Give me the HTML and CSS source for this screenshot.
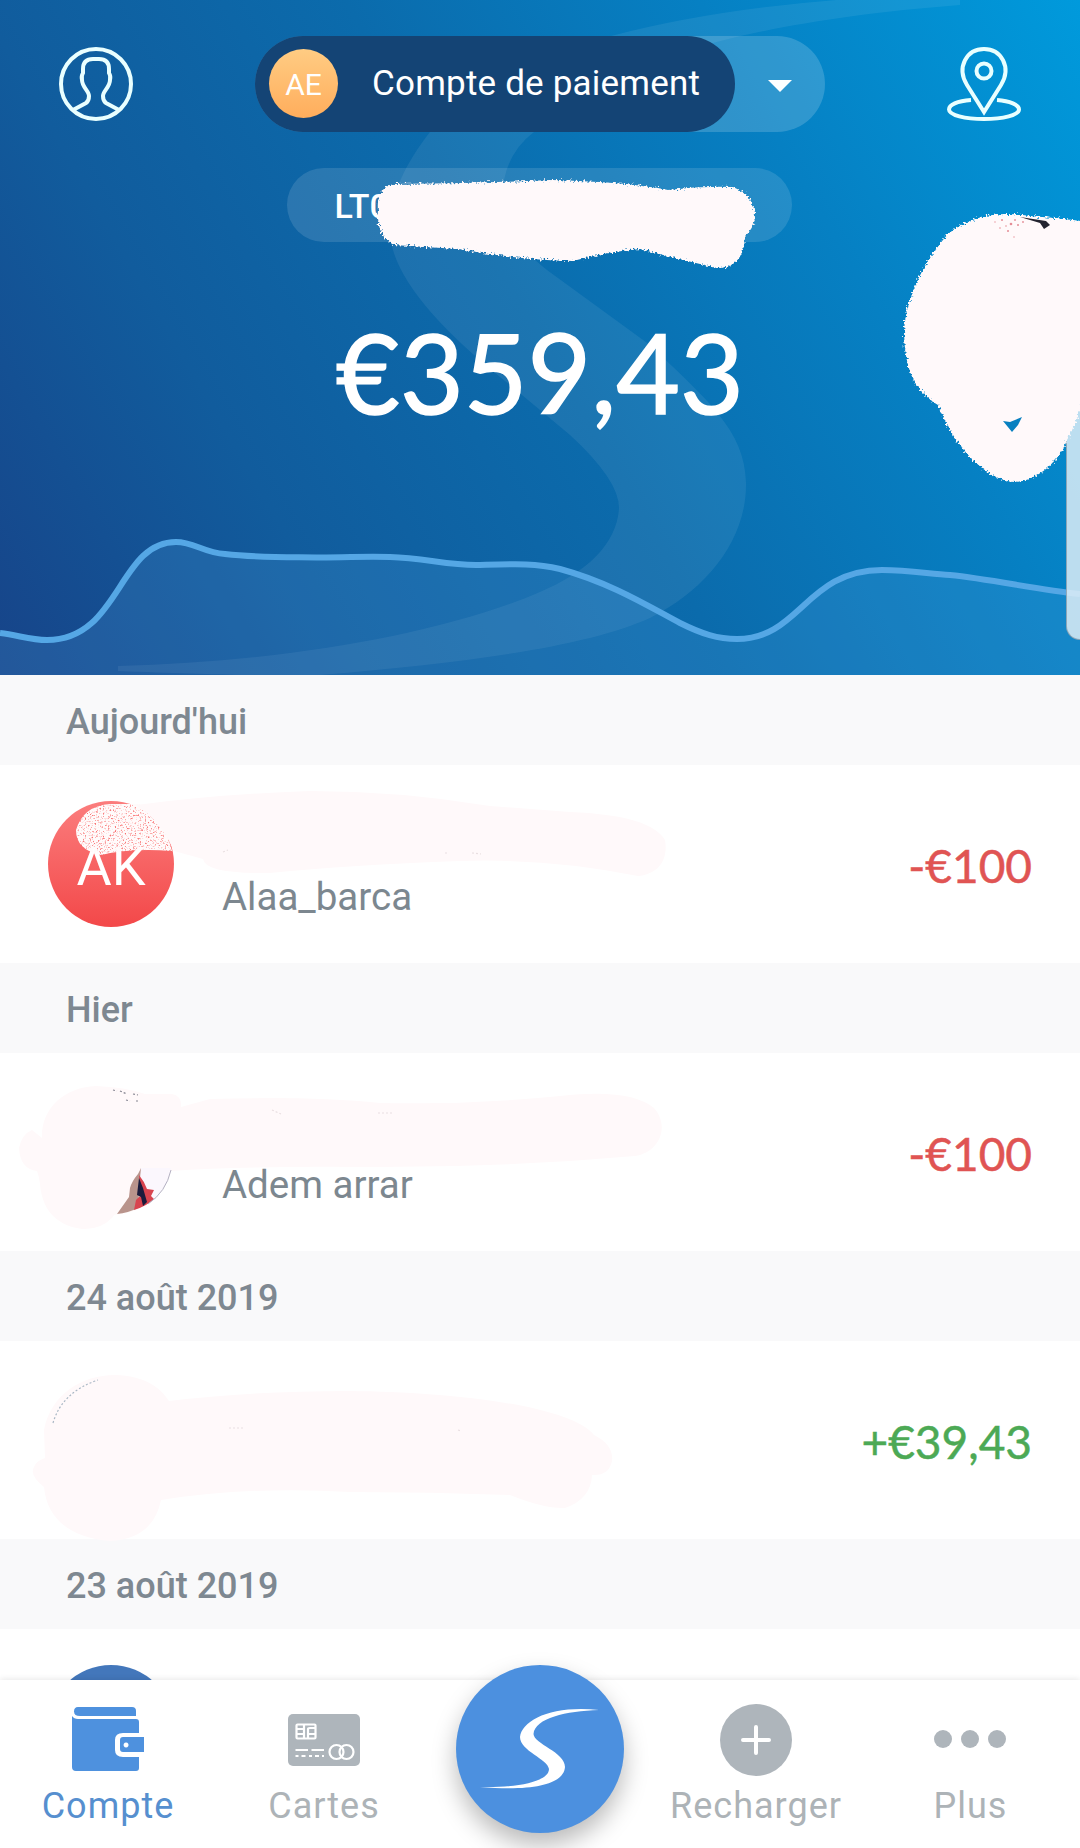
FILE: index.html
```html
<!DOCTYPE html>
<html lang="fr">
<head>
<meta charset="utf-8">
<title>Compte de paiement</title>
<link rel="stylesheet" href="styles.css">
</head>
<body>
<div class="app">
  <header class="hero">
    <svg class="hero-art" viewBox="0 0 1080 675">
      <path class="watermark" d="M960 0H836Q710 10 611 36C520 62 462 92 430 132C402 168 385 205 391 242Q402 300 510 385L570 435Q619 480 619 508C617 545 585 573 540 592C440 635 280 662 118 666V671C220 675 270 676 320 675C480 662 590 645 650 618C706 590 747 540 746 483C745 430 707 400 650 345L547 270C515 245 500 220 504 180Q510 150 534 132C580 80 700 25 960 5Z"/>
      <path class="wave-fill" d="M0 633C18 635 30 640 47 640C120 640 118 542 176 542C194 542 204 553 225 554C260 558 290 557 320 557.500C350 557.500 365 556 390 557C425 558 450 566 480 565C515 564 535 563 560 569C612 583 653 609 680 623C702 634 718 639 737 639C800 639 806 570 882 570C910 570 930 574 950 575C990 579 1040 590 1080 594V675H0Z"/>
      <path class="wave-line" d="M0 633C18 635 30 640 47 640C120 640 118 542 176 542C194 542 204 553 225 554C260 558 290 557 320 557.500C350 557.500 365 556 390 557C425 558 450 566 480 565C515 564 535 563 560 569C612 583 653 609 680 623C702 634 718 639 737 639C800 639 806 570 882 570C910 570 930 574 950 575C990 579 1040 590 1080 594"/>
    </svg>
    <div class="topbar">
      <svg class="top-icon" viewBox="0 0 74 74">
        <circle cx="37" cy="37" r="35"/>
        <path d="M14 63L27 56Q30 54 30 49C30 44 23 40 23 33Q22 29 24 26V22Q24 12 34 12H40Q50 12 50 22V26Q52 29 51 33C51 40 44 44 44 49Q44 54 47 56L60 63"/>
      </svg>
      <div class="switcher">
        <div class="account"><span class="initials">AE</span><span>Compte de paiement</span></div>
        <svg class="caret" viewBox="0 0 24 12"><path d="M0 0H24L12 12Z"/></svg>
      </div>
      <svg class="top-icon" viewBox="0 0 74 74">
        <path d="M37 65L20 38C9 20 20 2 37 2S65 20 54 38Z"/>
        <circle cx="37" cy="24" r="7.500"/>
        <path d="M24 53C10 54 2 58 2 62.500C2 68 18 72 37 72S72 68 72 62.500C72 58 63 54 50 53"/>
      </svg>
    </div>
    <div class="iban">LT0</div>
    <div class="balance">€359,43</div>
    <div class="edge-handle"></div>
  </header>

  <main>
    <h2 class="day">Aujourd'hui</h2>
    <section class="row">
      <div class="avatar avatar-red">AK</div>
      <div class="note">Alaa_barca</div>
      <div class="amount debit">-€100</div>
    </section>
    <h2 class="day">Hier</h2>
    <section class="row">
      <div class="avatar avatar-plain"></div>
      <div class="note">Adem arrar</div>
      <div class="amount debit">-€100</div>
    </section>
    <h2 class="day">24 août 2019</h2>
    <section class="row">
      <div class="avatar avatar-plain"></div>
      <div class="note"></div>
      <div class="amount credit">+€39,43</div>
    </section>
    <h2 class="day">23 août 2019</h2>
    <section class="row">
      <div class="avatar avatar-blue"></div>
    </section>
  </main>

  <svg class="scribbles" viewBox="0 0 1080 1848">
    <defs>
      <filter id="brush" x="-5%" y="-10%" width="110%" height="120%">
        <feTurbulence type="fractalNoise" baseFrequency="0.5" numOctaves="2" seed="4"/>
        <feDisplacementMap in="SourceGraphic" scale="7" xChannelSelector="R" yChannelSelector="G"/>
      </filter>
      <filter id="grain" x="-5%" y="-5%" width="110%" height="110%">
        <feTurbulence type="fractalNoise" baseFrequency="0.6" numOctaves="2" seed="8" result="n"/>
        <feColorMatrix in="n" type="matrix" values="0 0 0 0 1  0 0 0 0 .97  0 0 0 0 .97  4 0 0 0 -.85" result="m"/>
        <feComposite in="m" in2="SourceGraphic" operator="in"/>
      </filter>
    </defs>
    <g class="paint" filter="url(#brush)">
      <path d="M392 184Q470 184 550 180Q630 182 668 190Q700 186 733 187Q755 196 755 217Q753 230 745 236Q744 268 717 268Q670 257 640 249Q605 252 573 261Q520 260 458 249Q425 247 394 245Q376 236 378 210Q376 190 392 184Z"/>
      <path d="M1090 222Q1060 218 1030 216Q980 208 948 234C922 264 905 300 904 333C905 370 914 390 938 405C955 450 990 482 1015 482C1038 481 1060 460 1067 440Q1079 418 1084 395V215Z"/>
    </g>
    <path d="M1003 421L1010 422L1022 417L1018 425L1012 432Z" fill="#0880c0"/>
    <path d="M1020 217L1046 221L1050 225L1044 229L1040 223Z" fill="#23232f"/>
    <g fill="#e58d96"><circle cx="1002" cy="220" r="1"/><circle cx="1011" cy="224" r="1.300"/><circle cx="1008" cy="231" r="1"/><circle cx="1018" cy="225" r="1"/><circle cx="1000" cy="228" r=".8"/><circle cx="1014" cy="237" r=".7"/><circle cx="1023" cy="222" r=".9"/><circle cx="1006" cy="226" r=".8"/><circle cx="1015" cy="220" r=".9"/><circle cx="995" cy="222" r=".7"/></g>
    <path filter="url(#grain)" d="M76 830Q83 806 110 804H139Q163 815 172 851Q130 848 101 855Q76 850 76 830Z"/>
    <g class="paint">
      <path d="M136 805Q220 794 310 791Q400 791 490 806L570 812Q650 815 665 840C669 863 655 875 638 876Q550 858 460 861Q350 865 270 873Q205 874 203 859L174 851Q160 820 136 805Z"/>
      <path d="M42 1138C41 1108 65 1087 96 1086Q125 1087 145 1094L172 1094Q182 1096 181 1107L210 1099Q310 1096 380 1103Q470 1105 560 1096Q630 1088 654 1108C670 1126 660 1152 635 1156Q500 1168 360 1167Q250 1166 170 1171L141 1167L127 1197L112 1218Q100 1230 82 1229C54 1225 42 1208 40 1184Q39 1176 37 1171Q20 1169 19 1148Q22 1134 32 1130Z"/>
      <path d="M44 1430C51 1394 82 1375 115 1375C145 1376 160 1387 169 1401Q250 1391 350 1391C450 1392 570 1405 594 1435Q614 1445 612 1461Q609 1476 592 1475Q591 1499 565 1508Q545 1509 510 1495Q430 1492 350 1492Q250 1486 161 1500Q153 1539 110 1541C72 1538 47 1520 44 1487Q29 1475 34 1467Q36 1461 45 1458Z"/>
    </g>
    <!-- visible corner of the contact photo -->
    <path d="M141 1168H171Q167 1192 144 1206L139 1178Z" fill="#fbf7fd"/>
    <path d="M141 1168L138 1174Q132 1181 130 1188L129 1197L117 1214Q128 1213 138 1208L140 1178Z" fill="#b9948c"/>
    <path d="M139 1175Q144 1181 147 1189L154 1190L151 1196L154 1199Q147 1206 134 1210L136 1200L140 1196Z" fill="#d8444f"/>
    <path d="M139 1178L143 1188L147 1202L143 1206L141 1197L137 1195Z" fill="#1b1b3c"/>
    <path d="M171 1170Q166 1192 148 1204" fill="none" stroke="#b3b0c2"/>
    <path class="specks" d="M113 1090l4 1m3 0l7 3m6 0l5 1m-12 5l4 1m6 0l3 0"/>
    <path class="specks arc" d="M53 1423Q62 1392 98 1380"/>
    <path class="specks faint" d="M223 852l5-2m217 3l4 0m23 0l9 1M272 1110l9 4m97-1l15 0M229 1428l16 0m213 2l3 1"/>
  </svg>

  <nav class="tabs">
    <a class="tab active">
      <svg class="tab-icon" viewBox="0 0 72 72">
        <path d="M6 3H60Q64 3 64 7V12H8Q2 12 2 7.500T6 3Z"/>
        <path d="M0 12Q2 15 6 15H64Q67 15 67 18V29H51Q43 29 43 36V46Q43 53 51 53H67V64Q67 67 64 67H4Q0 67 0 63Z"/>
        <path fill-rule="evenodd" d="M51 33H72V48H51Q48 48 48 45V36Q48 33 51 33ZM54 38.500a2.500 2.500 0 1 0 .1 0Z"/>
      </svg>
      <span>Compte</span>
    </a>
    <a class="tab">
      <svg class="tab-icon" viewBox="0 0 72 72">
        <rect y="10" width="72" height="52" rx="5"/>
        <g class="card-lines">
          <rect x="8.500" y="20.500" width="19" height="14" rx="1"/>
          <path d="M8 25H16M8 30H16M16 20V35M20 35V25Q20 24 22 24H28M20 30H28"/>
          <path d="M7.500 46H20M23.500 46H36" /><path d="M7.500 52h3m3 0h4m3.500 0h3m3 0h4m3 0h2"/>
          <circle cx="48.500" cy="48" r="7"/><circle cx="58.500" cy="48" r="7"/>
        </g>
      </svg>
      <span>Cartes</span>
    </a>
    <a class="tab-main">
      <svg class="logo" viewBox="456 1665 168 168">
        <path d="M599 1710C566 1711 535 1718 533.500 1734C534 1744 565 1752 565 1767C564 1782 540 1792 480 1787C520 1788 549 1781 549 1769C548 1759 520 1751 520 1737C522 1720 552 1705 599 1710Z"/>
      </svg>
    </a>
    <a class="tab">
      <svg class="tab-icon" viewBox="0 0 72 72"><circle cx="36" cy="36" r="36"/><path class="plus" d="M36 23V49M23 36H49"/></svg>
      <span>Recharger</span>
    </a>
    <a class="tab">
      <svg class="tab-icon" viewBox="0 0 72 72"><circle cx="9" cy="35" r="9"/><circle cx="36" cy="35" r="9"/><circle cx="63" cy="35" r="9"/></svg>
      <span>Plus</span>
    </a>
  </nav>
</div>
</body>
</html>
```
FILE: styles.css
```css
* { box-sizing: border-box; }
body { margin: 0; background: #fff; font-family: Roboto, sans-serif; }
.app { position: relative; width: 1080px; height: 1848px; overflow: hidden; }

.hero {
  position: relative;
  display: flex;
  flex-direction: column;
  align-items: center;
  height: 675px;
  padding-top: 36px;
  color: #fff;
  background: linear-gradient(60deg, #174489 0%, #115c9d 25%, #0b6bac 50%, #0680c3 74%, #009adc 100%);
}
.hero-art { position: absolute; inset: 0; width: 1080px; height: 675px; }
.watermark { fill: #fff; fill-opacity: .07; }
.wave-fill { fill: #50a0e0; fill-opacity: .21; }
.wave-line { fill: none; stroke: #55a7e5; stroke-width: 6; }

.topbar {
  position: relative;
  display: flex;
  justify-content: space-between;
  align-items: center;
  width: 100%;
  height: 96px;
  padding: 0 59px;
}
.top-icon { width: 74px; height: 74px; fill: none; stroke: #e9ffff; stroke-width: 4; margin-top: -1px; }
.switcher {
  display: flex;
  align-items: center;
  width: 570px;
  height: 96px;
  border-radius: 48px;
  background: rgba(255, 255, 255, .17);
}
.account {
  display: flex;
  align-items: center;
  gap: 34px;
  width: 480px;
  height: 96px;
  padding-left: 14px;
  border-radius: 48px;
  background: #144475;
  font-size: 35px;
  letter-spacing: .2px;
  line-height: 98px;
  white-space: nowrap;
}
.initials {
  width: 69px;
  height: 69px;
  margin-top: -1px;
  border-radius: 50%;
  background: linear-gradient(#ffcc83, #ffad5c);
  font-size: 30px;
  line-height: 71px;
  text-align: center;
  letter-spacing: 0;
}
.caret { width: 24px; height: 12px; margin: 3px 0 0 33px; fill: #fff; }
.iban {
  position: relative;
  width: 505px;
  height: 74px;
  margin: 36px 2px 0 0;
  padding-left: 48px;
  border-radius: 37px;
  background: rgba(255, 255, 255, .12);
  font-size: 34px;
  font-weight: 500;
  line-height: 76px;
}
.balance {
  position: relative;
  margin-top: 63px;
  font-family: Lato, sans-serif;
  font-size: 110px;
  line-height: 132px;
  -webkit-text-stroke: 1.5px #fff;
}
.edge-handle {
  position: absolute;
  right: 0;
  top: 380px;
  width: 14px;
  height: 260px;
  border: solid rgba(110, 130, 145, .6);
  border-width: 0 0 1px 1px;
  border-radius: 0 0 0 16px;
  background: rgba(224, 238, 247, .84);
}

.day {
  height: 90px;
  margin: 0;
  padding-left: 66px;
  background: #f9f9fa;
  color: #7e8891;
  font-size: 36px;
  font-weight: 500;
  line-height: 95px;
}
.row { display: flex; align-items: center; height: 198px; padding: 0 48px; background: #fff; }
.avatar {
  flex: none;
  width: 126px;
  height: 126px;
  border-radius: 50%;
  color: #fff;
  font-size: 54px;
  line-height: 132px;
  text-align: center;
}
.avatar-red { background: linear-gradient(#fb7d7d, #f34849); }
.avatar-plain { background: #fffafa; }
.avatar-blue { background: #4377bb; }
.note { flex: 1; padding: 66px 0 0 48px; color: #7c878f; font-size: 38.5px; line-height: 66px; }
.amount { margin-top: 3px; font-family: Lato, sans-serif; font-size: 46px; line-height: 58px; }
.debit { color: #e05453; -webkit-text-stroke: .5px #e05453; }
.credit { color: #4ca955; -webkit-text-stroke: .5px #4ca955; }

.scribbles { position: absolute; inset: 0; width: 1080px; height: 1848px; pointer-events: none; }
.paint { fill: #fff9fa; }
.specks { fill: none; stroke: #858590; stroke-width: 1.2; stroke-dasharray: 2 2; }
.arc { stroke: #aab8c5; }
.faint { stroke: #e9dfe1; }

.tabs {
  position: absolute;
  left: 0;
  right: 0;
  bottom: 0;
  display: grid;
  grid-template-columns: repeat(5, 216px);
  justify-items: center;
  height: 168px;
  background: #fff;
  box-shadow: 0 -1px 6px rgba(0, 0, 0, .09);
}
.tab {
  display: flex;
  flex-direction: column;
  align-items: center;
  padding-top: 24px;
  color: #adb3b7;
  font-size: 36px;
  line-height: 42px;
  letter-spacing: 1px;
}
.tab:last-child { margin-right: 3px; }
.tab-icon { width: 72px; height: 72px; margin-bottom: 9px; fill: #aeb5bb; }
.active { color: #568fcf; }
.active .tab-icon { fill: #4e91de; }
.card-lines { fill: none; stroke: #fff; stroke-width: 2.2; }
.plus { fill: none; stroke: #fff; stroke-width: 4; stroke-linecap: round; }
.tab-main {
  width: 168px;
  height: 168px;
  margin-top: -15px;
  border-radius: 50%;
  background: #4c90df;
  box-shadow: 0 12px 24px rgba(0, 0, 0, .27);
}
.logo { display: block; width: 168px; height: 168px; fill: #fff; }
```
